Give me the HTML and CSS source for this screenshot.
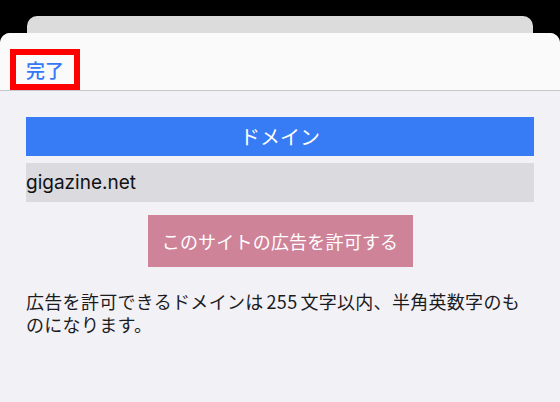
FILE: index.html
```html
<!DOCTYPE html>
<html lang="ja">
<head>
<meta charset="utf-8">
<link rel="stylesheet" href="styles.css">
</head>
<body>
<div class="back-card"></div>
<div class="sheet">
  <header class="sheet-header">
    <button class="done">完了</button>
  </header>
  <main class="content">
    <div class="title-bar">ドメイン</div>
    <div class="field">gigazine.net</div>
    <button class="allow">このサイトの広告を許可する</button>
    <p class="note">広告を許可できるドメインは<span class="num">255</span>文字以内、半角英数字のものになります。</p>
  </main>
</div>
</body>
</html>
```

FILE: styles.css
```css
* { box-sizing: border-box; }
html, body {
  margin: 0;
  padding: 0;
  background: #000;
  width: 560px;
  height: 402px;
  overflow: hidden;
  font-family: "Noto Sans CJK JP", "Noto Sans", sans-serif;
}
.back-card {
  margin: 16px 27px 0;
  height: 17px;
  background: #dcdcdc;
  border-radius: 10px 10px 0 0;
}
.sheet {
  background: #f2f1f6;
  border-radius: 10px 10px 0 0;
  height: 369px;
  overflow: hidden;
}
.sheet-header {
  height: 58px;
  background: #fafafa;
  border-bottom: 1px solid #c8c7cc;
  padding: 16px 0 0 10px;
}
.done {
  display: block;
  width: 70px;
  height: 41px;
  border: 6px solid #ff0000;
  background: transparent;
  padding: 0;
  margin: 0;
  font-family: inherit;
  font-size: 19px;
  font-weight: 500;
  line-height: 29px;
  color: #3478f6;
  text-align: center;
}
.content {
  padding: 26px 26px 0;
  display: flex;
  flex-direction: column;
}
.title-bar {
  height: 39px;
  line-height: 39px;
  background: #377bf5;
  color: #fff;
  font-size: 20px;
  text-align: center;
}
.field {
  margin-top: 7px;
  height: 39px;
  line-height: 39px;
  background: #dadadf;
  color: #111;
  font-family: "Inter", "Noto Sans", sans-serif;
  font-size: 19px;
}
.allow {
  margin: 13px auto 0;
  width: 265px;
  height: 52px;
  border: 0;
  padding: 0;
  background: #cf8399;
  color: #fff;
  font-family: inherit;
  font-size: 18px;
  letter-spacing: 0.2px;
}
.note {
  margin: 23px 0 0;
  font-size: 18px;
  letter-spacing: 0.3px;
  line-height: 22.5px;
  color: #1c1c1e;
}
.num {
  margin: 0 3px;
}
```
